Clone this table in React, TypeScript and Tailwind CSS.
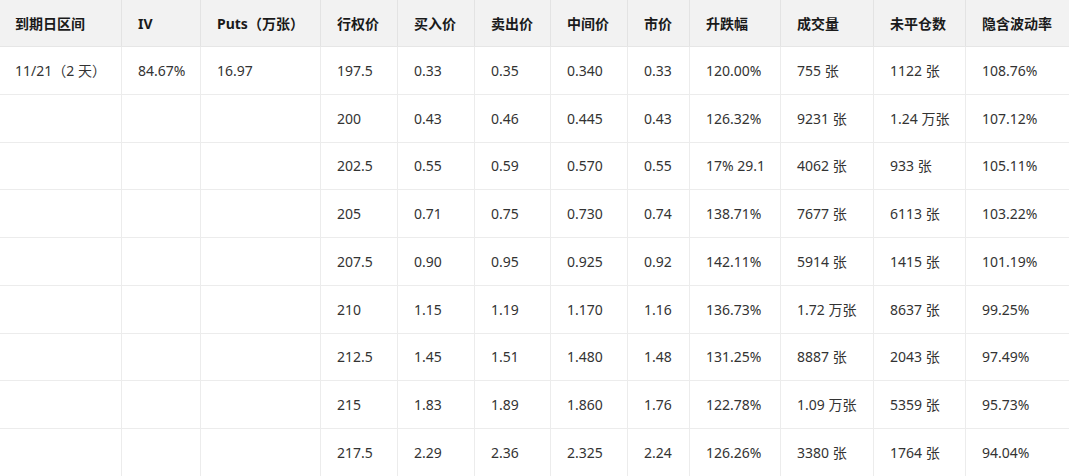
const cols = [
  { key: 'expiry', title: '到期日区间', w: 'w-[122px]' },
  { key: 'iv', title: 'IV', w: 'w-[79px]' },
  { key: 'puts', title: 'Puts（万张）', w: 'w-[120px]' },
  { key: 'strike', title: '行权价', w: 'w-[77px]' },
  { key: 'bid', title: '买入价', w: 'w-[77px]' },
  { key: 'ask', title: '卖出价', w: 'w-[76px]' },
  { key: 'mid', title: '中间价', w: 'w-[77px]' },
  { key: 'last', title: '市价', w: 'w-[62px]' },
  { key: 'chg', title: '升跌幅', w: 'w-[91px]' },
  { key: 'vol', title: '成交量', w: 'w-[93px]' },
  { key: 'oi', title: '未平仓数', w: 'w-[92px]' },
  { key: 'impv', title: '隐含波动率', w: 'flex-1' },
]

const rows: string[][] = [
  ['11/21（2 天）', '84.67%', '16.97', '197.5', '0.33', '0.35', '0.340', '0.33', '120.00%', '755 张', '1122 张', '108.76%'],
  ['', '', '', '200', '0.43', '0.46', '0.445', '0.43', '126.32%', '9231 张', '1.24 万张', '107.12%'],
  ['', '', '', '202.5', '0.55', '0.59', '0.570', '0.55', '17% 29.1', '4062 张', '933 张', '105.11%'],
  ['', '', '', '205', '0.71', '0.75', '0.730', '0.74', '138.71%', '7677 张', '6113 张', '103.22%'],
  ['', '', '', '207.5', '0.90', '0.95', '0.925', '0.92', '142.11%', '5914 张', '1415 张', '101.19%'],
  ['', '', '', '210', '1.15', '1.19', '1.170', '1.16', '136.73%', '1.72 万张', '8637 张', '99.25%'],
  ['', '', '', '212.5', '1.45', '1.51', '1.480', '1.48', '131.25%', '8887 张', '2043 张', '97.49%'],
  ['', '', '', '215', '1.83', '1.89', '1.860', '1.76', '122.78%', '1.09 万张', '5359 张', '95.73%'],
  ['', '', '', '217.5', '2.29', '2.36', '2.325', '2.24', '126.26%', '3380 张', '1764 张', '94.04%'],
]

export default function App() {
  return (
    <div
      className="w-[1069px] h-[476px] overflow-hidden bg-white text-[14px] text-[#333]"
      style={{ fontFamily: '"Noto Sans", "Noto Sans CJK SC", sans-serif' }}
    >
      {/* Header */}
      <div className="flex h-[47px] bg-[#f2f2f2] border-b border-[#e6e6e6]">
        {cols.map((c, i) => (
          <div
            key={c.key}
            className={`${c.w} shrink-0 flex items-center font-bold text-[#1a1a1a] ${i === 0 ? 'pl-[15px]' : 'pl-4'} ${i < cols.length - 1 ? 'border-r border-[#e3e3e3]' : ''}`}
          >
            {c.title}
          </div>
        ))}
      </div>

      {/* Body */}
      {rows.map((r, ri) => (
        <div key={ri} className="flex h-[47.75px] border-b border-[#ececec]">
          {r.map((v, i) => (
            <div
              key={i}
              className={`${cols[i].w} shrink-0 flex items-center whitespace-nowrap ${i === 0 ? 'pl-[15px]' : 'pl-4'} ${i < cols.length - 1 ? 'border-r border-[#ececec]' : ''}`}
            >
              {v}
            </div>
          ))}
        </div>
      ))}
    </div>
  )
}
